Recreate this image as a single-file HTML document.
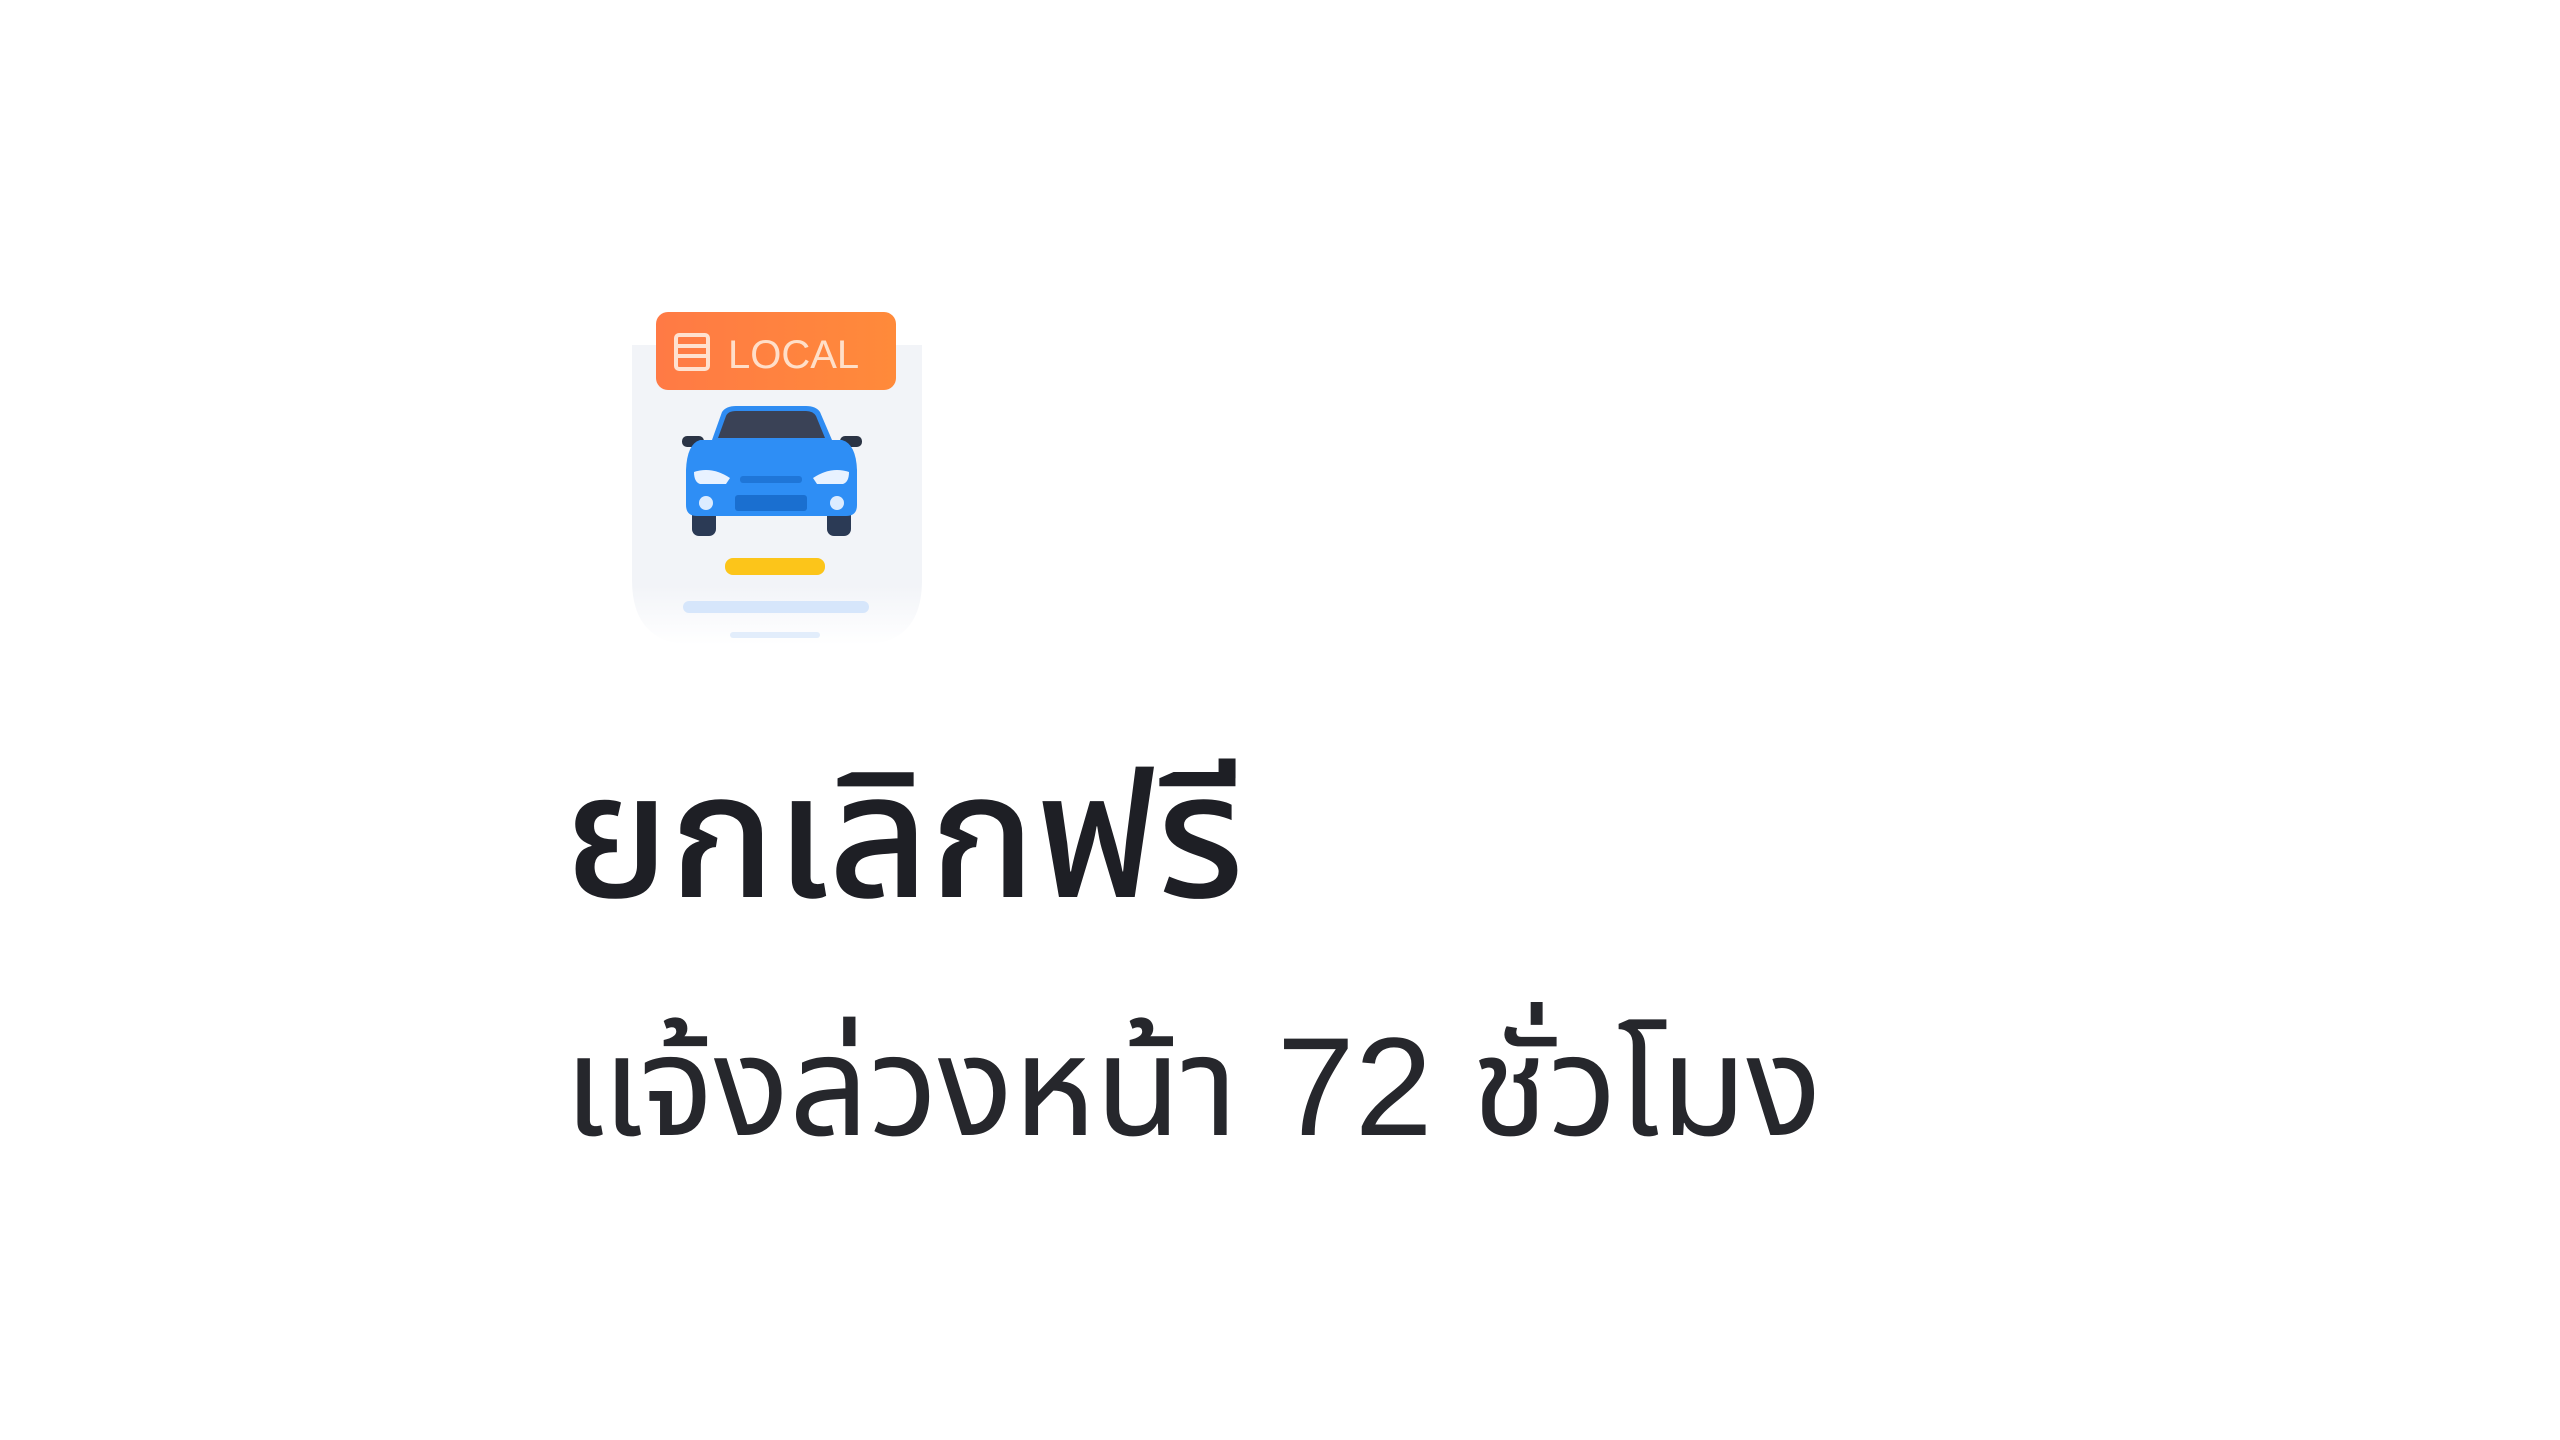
<!DOCTYPE html>
<html><head><meta charset="utf-8"><style>
html,body{margin:0;padding:0;background:#fff;width:2560px;height:1440px;overflow:hidden;position:relative}
.t{position:absolute;left:564px;font-family:"Liberation Sans","Noto Sans Thai","Tlwg Typist","Garuda","Loma",sans-serif;color:#1e1f25;white-space:nowrap;line-height:1}
</style></head><body>
<svg width="2560" height="700" style="position:absolute;left:0;top:0">
<defs>
<linearGradient id="bg" x1="0" y1="0" x2="0" y2="1"><stop offset="0" stop-color="#f2f4f8"/><stop offset="0.8" stop-color="#f2f4f8"/><stop offset="1" stop-color="#fff"/></linearGradient>
<linearGradient id="or" x1="0" y1="0" x2="1" y2="0"><stop offset="0" stop-color="#ff7a45"/><stop offset="1" stop-color="#ff8a3a"/></linearGradient>
</defs>
<path d="M632 345 H922 V580 Q922 645 860 645 H695 Q632 645 632 580 Z" fill="url(#bg)"/>
<rect x="656" y="312" width="240" height="78" rx="12" fill="url(#or)"/>
<g fill="none" stroke="#fff3e8" stroke-width="4" opacity="0.85">
<rect x="676" y="335" width="32" height="34" rx="3"/><line x1="676" y1="346" x2="708" y2="346"/><line x1="676" y1="356" x2="708" y2="356"/>
</g>
<text x="728" y="368" font-family="Liberation Sans,sans-serif" font-size="40" fill="#ffe9d8" opacity="0.9">LOCAL</text>
<rect x="692" y="505" width="24" height="31" rx="7" fill="#2b3a55"/>
<rect x="827" y="505" width="24" height="31" rx="7" fill="#2b3a55"/>
<rect x="682" y="436" width="22" height="11" rx="5" fill="#2b3445"/>
<rect x="840" y="436" width="22" height="11" rx="5" fill="#2b3445"/>
<path d="M712 440 L722 412 Q726 406 736 406 H806 Q816 406 820 412 L832 440 Z" fill="#2f8cf2"/>
<path d="M718 438 L726 416 Q728 411 736 411 H806 Q813 411 816 416 L825 438 Z" fill="#3a4256"/>
<path d="M700 440 H842 Q856 444 857 470 V505 Q857 516 846 516 H697 Q686 516 686 505 V470 Q687 444 700 440 Z" fill="#2e8ef5"/>
<path d="M694 472 Q712 466 730 478 L726 484 H700 Q694 482 694 472 Z" fill="#e8f2ff"/>
<path d="M849 472 Q831 466 813 478 L817 484 H843 Q849 482 849 472 Z" fill="#e8f2ff"/>
<rect x="740" y="476" width="62" height="7" rx="3" fill="#1f76d8"/>
<rect x="735" y="495" width="72" height="16" rx="3" fill="#1a6fd0"/>
<circle cx="706" cy="503" r="7" fill="#dcecff"/>
<circle cx="837" cy="503" r="7" fill="#dcecff"/>
<rect x="725" y="558" width="100" height="17" rx="8" fill="#fcc51a"/>
<rect x="683" y="601" width="186" height="12" rx="6" fill="#d6e6fb"/>
<rect x="730" y="632" width="90" height="6" rx="3" fill="#e2edfb"/>
</svg>
<div class="t" style="top:750px;font-size:175px;font-weight:500">ยกเลิกฟรี</div>
<div class="t" style="top:1017px;font-size:140px;font-weight:400;color:#26272c">แจ้งล่วงหน้า 72 ชั่วโมง</div>
</body></html>
